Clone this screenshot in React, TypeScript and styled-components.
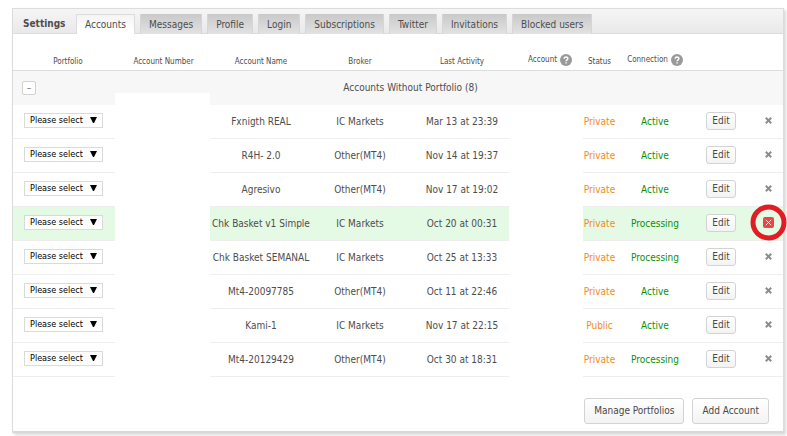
import React, { useState } from "react";
import styled, { createGlobalStyle } from "styled-components";

const GlobalStyle = createGlobalStyle`
  *, *::before, *::after { box-sizing: border-box; }
  body {
    margin: 0;
    background: #fff;
    color: #4d4d4d;
    font-family: Tahoma, "DejaVu Sans Condensed", "DejaVu Sans", sans-serif;
    font-size: 10px;
    line-height: 12px;
  }
  button, select { font: inherit; }
`;

const Panel = styled.main`
  margin: 8px 3px 3px 12px;
  border: 1px solid #dcdcdc;
  border-bottom: 2px solid #d8d8d8;
  box-shadow: 2px 2px 3px #d9d9d9;
  background: #fff;
`;

const TopBar = styled.header`
  display: flex;
  align-items: flex-end;
  height: 25px;
  padding-left: 10px;
  border-bottom: 1px solid #dcdcdc;
  background: linear-gradient(#f5f5f5, #e9e9e9);
`;

const Title = styled.h1`
  flex: 0 0 53px;
  margin: 0;
  padding-bottom: 2px;
  font-size: 10px;
  line-height: 14px;
`;

const Tabs = styled.nav`
  display: flex;
  gap: 5px;
`;

const Tab = styled.a<{ $active?: boolean }>`
  height: 20px;
  margin-bottom: -1px;
  padding: ${(p) => (p.$active ? 4 : 5)}px 8px 0;
  border: solid ${(p) => (p.$active ? "#dcdcdc" : "#d6d6d6")};
  border-width: ${(p) => (p.$active ? "1px 1px 0" : "0 1px")};
  background: ${(p) => (p.$active ? "linear-gradient(#f4f4f4, #fff 80%)" : "linear-gradient(#c9c9c9, #e2e2e2)")};
  color: #4d4d4d;
  text-decoration: none;
  white-space: nowrap;
`;

const Grid = styled.table`
  width: 100%;
  table-layout: fixed;
  border-collapse: separate;
  border-spacing: 0;
  text-align: center;
`;

const Col = styled.col<{ $w: number }>`
  width: ${(p) => p.$w}px;
`;

const HeadCell = styled.th<{ $help?: boolean; $left?: number }>`
  height: 37px;
  padding: ${(p) => (p.$help ? "19px 0 4px" : "19px 0 0")};
  padding-left: ${(p) => p.$left ?? 0}px;
  border-bottom: 1px solid #dcdcdc;
  font-size: 8px;
  font-weight: normal;
  white-space: nowrap;
`;

const HeadLabel = styled.span`
  display: inline-flex;
  align-items: center;
  gap: 3px;
`;

const GroupCell = styled.td<{ $cut?: boolean }>`
  height: 34px;
  padding: 0;
  background: ${(p) => (p.$cut ? "linear-gradient(#f7f7f7 22px, #fff 22px)" : "#f7f7f7")};
  white-space: nowrap;
`;

const Toggle = styled.button`
  display: block;
  width: 14px;
  height: 14px;
  margin-left: 9px;
  padding: 0;
  border: 1px solid #d2d2d2;
  border-radius: 2px;
  background: #fff;
  color: #777;
  line-height: 10px;
`;

const Row = styled.tr<{ $hot?: boolean }>`
  background: ${(p) => (p.$hot ? "#e4fae4" : "#fff")};
`;

const Cell = styled.td<{ $left?: number; $tone?: string }>`
  height: 34px;
  padding: 1px 0 0 ${(p) => p.$left ?? 0}px;
  border-bottom: 1px solid #eee;
  color: ${(p) => p.$tone ?? "inherit"};
  white-space: nowrap;
`;

const ControlCell = styled(Cell)`
  padding-top: 0;
  padding-bottom: 2px;
`;

const BlankCell = styled.td`
  padding: 0;
  background: #fff;
`;

const SelectBox = styled.label`
  position: relative;
  display: block;
  width: 79px;
  height: 15px;
  margin-left: 11px;

  select {
    display: block;
    width: 100%;
    height: 100%;
    padding: 0 0 0 5px;
    border: 1px solid #dadada;
    border-radius: 0;
    appearance: none;
    background: #fff;
    color: #000;
    font-size: 9px;
    line-height: 13px;
  }

  svg {
    position: absolute;
    top: 4px;
    right: 6px;
    pointer-events: none;
  }
`;

const Button = styled.button`
  height: 26px;
  padding: 0 9px;
  border: 1px solid #d3d3d3;
  border-radius: 3px;
  background: linear-gradient(#fff, #f3f3f3);
  color: #484848;
  line-height: 12px;
  white-space: nowrap;
`;

const EditButton = styled(Button)`
  height: 18px;
  width: 30px;
  padding: 0;
`;

const RemoveButton = styled.button<{ $hot?: boolean }>`
  display: grid;
  place-items: center;
  position: relative;
  width: 11px;
  height: 11px;
  margin: 0 auto;
  padding: 0;
  border: 0;
  border-radius: 2px;
  background: ${(p) => (p.$hot ? "#f04444" : "transparent")};
`;

const Ring = styled.svg`
  position: absolute;
  top: -13px;
  left: -13px;
  pointer-events: none;
`;

const Footer = styled.footer`
  display: flex;
  justify-content: flex-end;
  gap: 8px;
  padding: 21px 14px 7px;
`;

const HelpIcon = () => (
  <svg width="12" height="12" viewBox="0 0 12 12" role="img" aria-label="Help">
    <circle cx="6" cy="6" r="6" fill="#999" />
    <path d="M4.2 4.8C4.2 2.4 7.9 2.5 7.9 4.6C7.9 5.9 6.1 5.7 6.1 7.2M6.1 8.3V9.6" fill="none" stroke="#fff" strokeWidth="1.4" />
  </svg>
);

const Chevron = () => (
  <svg width="7" height="6" viewBox="0 0 7 6" aria-hidden="true">
    <path d="M0 0H7L4 6H3Z" fill="#000" />
  </svg>
);

const Cross = ({ hot }: { hot?: boolean }) => (
  <svg width="7" height="7" viewBox="0 0 7 7" aria-hidden="true">
    <path
      d={hot ? "M.8 .8L6.2 6.2M6.2 .8L.8 6.2" : "M.8 .8L6.2 6.2M6.2 .8L.8 6.2"}
      stroke={hot ? "#ffdede" : "#8c8c8c"}
      strokeWidth={hot ? 1 : 2}
    />
  </svg>
);

const tabs = ["Accounts", "Messages", "Profile", "Login", "Subscriptions", "Twitter", "Invitations", "Blocked users"];

const columns = [
  { label: "Portfolio", width: 102, left: 8 },
  { label: "Account Number", width: 95, left: 2 },
  { label: "Account Name", width: 102 },
  { label: "Broker", width: 96 },
  { label: "Last Activity", width: 101, left: 7 },
  { label: "Account", width: 74, left: 8, help: true },
  { label: "Status", width: 33 },
  { label: "Connection", width: 78, help: true },
  { label: "", width: 54 },
  { label: "", width: 35 },
];

const accounts = [
  { name: "Fxnigth REAL", broker: "IC Markets", activity: "Mar 13 at 23:39", status: "Private", connection: "Active" },
  { name: "R4H- 2.0", broker: "Other(MT4)", activity: "Nov 14 at 19:37", status: "Private", connection: "Active" },
  { name: "Agresivo", broker: "Other(MT4)", activity: "Nov 17 at 19:02", status: "Private", connection: "Active" },
  { name: "Chk Basket v1 Simple", broker: "IC Markets", activity: "Oct 20 at 00:31", status: "Private", connection: "Processing", hot: true },
  { name: "Chk Basket SEMANAL", broker: "IC Markets", activity: "Oct 25 at 13:33", status: "Private", connection: "Processing" },
  { name: "Mt4-20097785", broker: "Other(MT4)", activity: "Oct 11 at 22:46", status: "Private", connection: "Active" },
  { name: "Kami-1", broker: "IC Markets", activity: "Nov 17 at 22:15", status: "Public", connection: "Active" },
  { name: "Mt4-20129429", broker: "Other(MT4)", activity: "Oct 30 at 18:31", status: "Private", connection: "Processing" },
];

export default function App() {
  const [open, setOpen] = useState(true);
  return (
    <>
      <GlobalStyle />
      <Panel>
        <TopBar>
          <Title>Settings</Title>
          <Tabs aria-label="Settings sections">
            {tabs.map((tab, i) => (
              <Tab key={tab} href="#" $active={i === 0} aria-current={i === 0 ? "page" : undefined}>
                {tab}
              </Tab>
            ))}
          </Tabs>
        </TopBar>
        <Grid>
          <colgroup>
            {columns.map((c, i) => (
              <Col key={i} $w={c.width} />
            ))}
          </colgroup>
          <thead>
            <tr>
              {columns.map((c, i) => (
                <HeadCell key={i} $help={c.help} $left={c.left}>
                  {c.help ? (
                    <HeadLabel>
                      {c.label}
                      <HelpIcon />
                    </HeadLabel>
                  ) : (
                    c.label
                  )}
                </HeadCell>
              ))}
            </tr>
          </thead>
          <tbody>
            <tr>
              <GroupCell>
                <Toggle aria-label="Toggle group" aria-expanded={open} onClick={() => setOpen(!open)}>
                  {open ? "–" : "+"}
                </Toggle>
              </GroupCell>
              <GroupCell $cut />
              <GroupCell />
              <GroupCell colSpan={2}>Accounts Without Portfolio (8)</GroupCell>
              <GroupCell colSpan={5} />
            </tr>
            {open &&
              accounts.map((a) => (
                <Row key={a.name} $hot={a.hot}>
                  <ControlCell>
                    <SelectBox>
                      <select aria-label={`Portfolio for ${a.name}`}>
                        <option>Please select</option>
                      </select>
                      <Chevron />
                    </SelectBox>
                  </ControlCell>
                  <BlankCell />
                  <Cell>{a.name}</Cell>
                  <Cell>{a.broker}</Cell>
                  <Cell $left={7}>{a.activity}</Cell>
                  <BlankCell />
                  <Cell $tone="#f28a1c">{a.status}</Cell>
                  <Cell $tone="#0b8f0b">{a.connection}</Cell>
                  <ControlCell>
                    <EditButton>Edit</EditButton>
                  </ControlCell>
                  <ControlCell $left={5}>
                    <RemoveButton $hot={a.hot} aria-label={`Remove ${a.name}`}>
                      <Cross hot={a.hot} />
                      {a.hot && (
                        <Ring width="37" height="37" viewBox="0 0 37 37" aria-hidden="true">
                          <circle cx="18.5" cy="18.5" r="15.5" fill="none" stroke="#e31b23" strokeWidth="5" />
                        </Ring>
                      )}
                    </RemoveButton>
                  </ControlCell>
                </Row>
              ))}
          </tbody>
        </Grid>
        <Footer>
          <Button>Manage Portfolios</Button>
          <Button>Add Account</Button>
        </Footer>
      </Panel>
    </>
  );
}
